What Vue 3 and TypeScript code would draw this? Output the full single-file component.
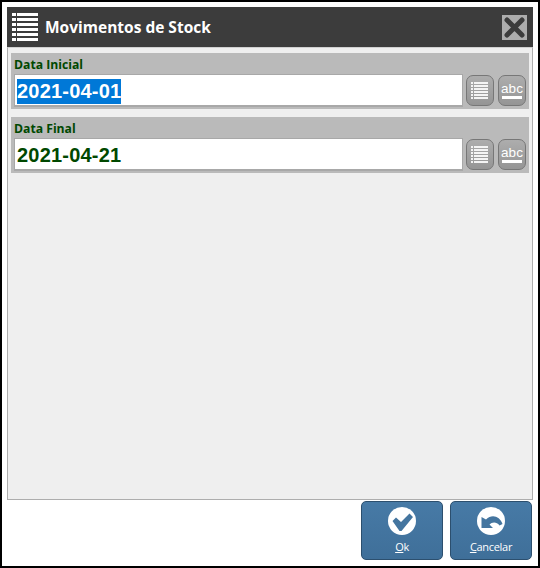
<template>
  <div class="window">
    <header class="title-bar">
      <svg class="title-icon" width="28" height="28" viewBox="0 0 28 28">
        <g fill="#fff">
          <rect v-for="y in rows" :key="y" x="0" :y="y" width="4" height="3" />
          <rect v-for="y in rows" :key="'l' + y" x="5" :y="y" width="21" height="3" />
        </g>
      </svg>
      <span class="title">Movimentos de Stock</span>
      <button class="close-btn" type="button">
        <svg width="25" height="25" viewBox="0 0 25 25">
          <path d="M5 5 L20 20 M20 5 L5 20" stroke="#3c3c3c" stroke-width="5" stroke-linecap="round" />
        </svg>
      </button>
    </header>

    <main class="panel">
      <section v-for="field in fields" :key="field.label" class="field">
        <label class="field-label">{{ field.label }}</label>
        <div class="field-row">
          <div class="field-input">
            <span :class="{ selected: field.selected }">{{ field.value }}</span>
          </div>
          <button class="tool-btn" type="button">
            <svg width="18" height="18" viewBox="0 0 18 18">
              <g fill="#f4f4f4">
                <rect v-for="y in toolRows" :key="y" x="0" :y="y" width="2" height="2" />
                <rect v-for="y in toolRows" :key="'l' + y" x="3" :y="y" width="14" height="2" />
              </g>
            </svg>
          </button>
          <button class="tool-btn abc" type="button">
            <span class="abc-text">abc</span>
            <span class="abc-line"></span>
          </button>
        </div>
      </section>
    </main>

    <footer class="actions">
      <button class="action-btn" type="button">
        <svg width="28" height="28" viewBox="0 0 28 28">
          <circle cx="14" cy="14" r="14" fill="#fff" />
          <path d="M4.5 14 L8 10.5 L13 15 L21.5 6.5 L25 10 L13.5 24 L11.5 24 Z" fill="#44759f" />
        </svg>
        <span><u>O</u>k</span>
      </button>
      <button class="action-btn" type="button">
        <svg width="28" height="28" viewBox="0 0 28 28">
          <circle cx="14" cy="14" r="14" fill="#fff" />
          <path d="M4.5 10 L4.5 21 L16 21 L12.5 17.5 C15 15 19.5 14.5 22.5 18.5 L25.5 17 C23 9.5 15 6.5 9 12.5 Z" fill="#44759f" />
        </svg>
        <span><u>C</u>ancelar</span>
      </button>
    </footer>
  </div>
</template>

<script setup lang="ts">
const rows = [0, 5, 10, 15, 20, 25]
const toolRows = [0, 3, 6, 9, 12, 15]

const fields = [
  { label: 'Data Inicial', value: '2021-04-01', selected: true },
  { label: 'Data Final', value: '2021-04-21', selected: false }
]
</script>

<style scoped>
.window {
  width: 540px;
  height: 568px;
  box-sizing: border-box;
  border: 2px solid #000;
  padding: 5px 5px 0;
  background: #fff;
  display: flex;
  flex-direction: column;
  font-family: "Open Sans", "Liberation Sans", sans-serif;
}

.title-bar {
  height: 40px;
  flex-shrink: 0;
  background: #3c3c3c;
  display: flex;
  align-items: center;
  padding: 0 6px 0 5px;
}

.title-icon {
  flex-shrink: 0;
}

.title {
  flex: 1;
  margin-left: 5px;
  color: #fff;
  font-size: 15.5px;
  font-weight: 700;
}

.close-btn {
  width: 25px;
  height: 25px;
  padding: 0;
  border: none;
  background: #adadad;
  display: flex;
}

.panel {
  height: 453px;
  flex-shrink: 0;
  box-sizing: border-box;
  border: 1px solid #adadad;
  border-top-color: #d0d0d0;
  background: #efefef;
  padding: 5px 3px;
  display: flex;
  flex-direction: column;
  gap: 8px;
}

.field {
  height: 56px;
  box-sizing: border-box;
  background: #bababa;
  padding: 1px 3px 0;
}

.field-label {
  display: block;
  height: 20px;
  line-height: 22px;
  color: #004800;
  font-size: 12.2px;
  font-weight: 700;
}

.field-row {
  display: flex;
  align-items: center;
  gap: 3px;
}

.field-input {
  flex: 1;
  height: 33px;
  box-sizing: border-box;
  background: #fff;
  border: 1px solid #a8a8a8;
  border-width: 1px 1px 2px;
  padding: 3px 0 0 2px;
  display: flex;
  align-items: center;
  color: #004800;
  font-family: "Liberation Sans", Arial, sans-serif;
  font-size: 20px;
  font-weight: 700;
  letter-spacing: 0.2px;
}

.field-input span {
  line-height: 25px;
}

.field-input .selected {
  background: #0078d7;
  color: #fff;
}

.tool-btn {
  width: 28px;
  height: 31px;
  padding: 0;
  box-sizing: border-box;
  border: 1px solid #777;
  border-radius: 7px;
  background: linear-gradient(#adadad, #959595);
  display: flex;
  flex-direction: column;
  align-items: center;
  justify-content: center;
}

.abc {
  margin-left: 1px;
}

.abc-text {
  color: #fff;
  font-family: "Liberation Sans", Arial, sans-serif;
  font-size: 13.5px;
  line-height: 13px;
}

.abc-line {
  display: block;
  width: 20px;
  height: 3px;
  margin-top: 1px;
  background: #fff;
}

.actions {
  flex: 1;
  display: flex;
  justify-content: flex-end;
  align-items: flex-start;
  gap: 7px;
  padding: 1px 1px 0 0;
}

.action-btn {
  width: 82px;
  height: 59px;
  padding: 5px 0 0;
  box-sizing: border-box;
  border: 1px solid #2c4f6e;
  border-radius: 5px;
  background: linear-gradient(#477aa6, #3f6f99);
  color: #fff;
  font-family: "Open Sans", "Liberation Sans", sans-serif;
  font-size: 11px;
  letter-spacing: -0.3px;
  display: flex;
  flex-direction: column;
  align-items: center;
  gap: 4px;
}
</style>

<style>
html,
body {
  margin: 0;
  background: #fff;
}
</style>
